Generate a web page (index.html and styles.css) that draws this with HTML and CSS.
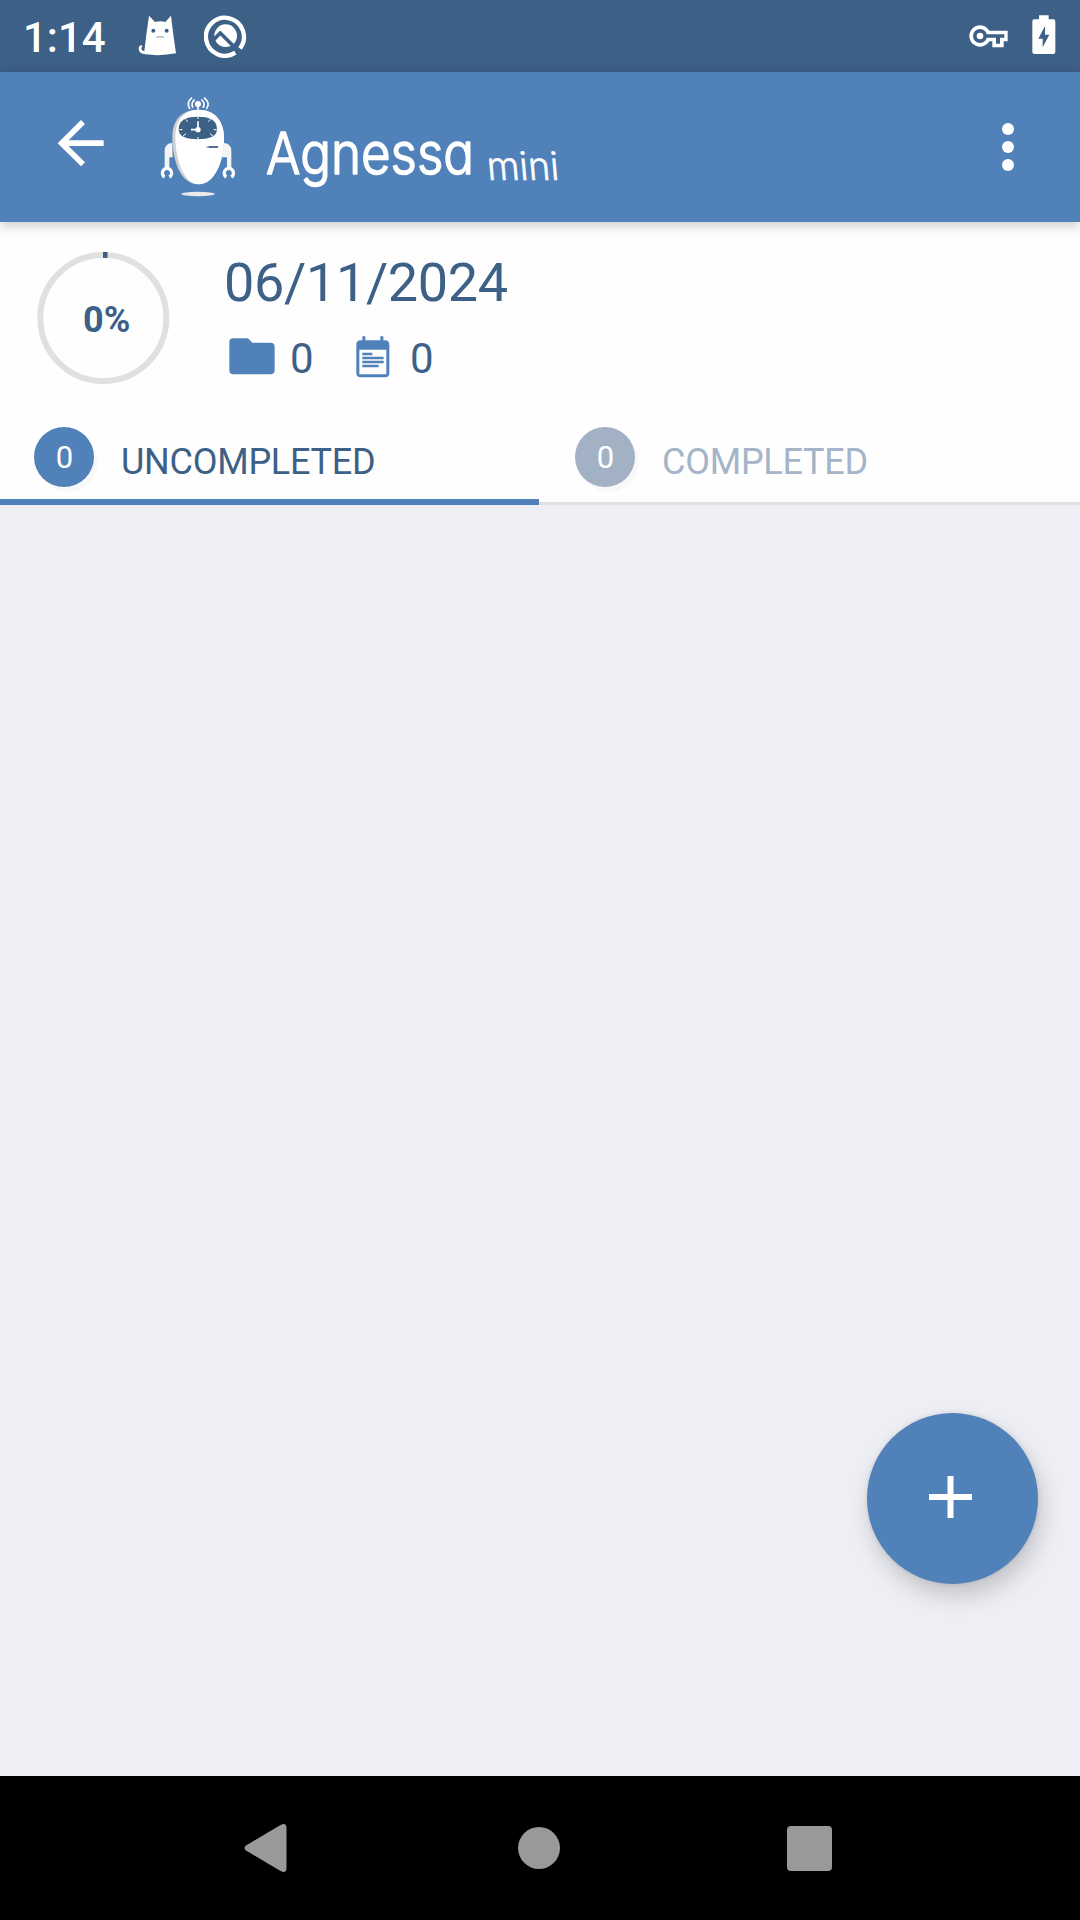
FILE: index.html
```html
<!DOCTYPE html>
<html lang="en">
<head>
<meta charset="utf-8">
<title>Agnessa mini</title>
<link rel="stylesheet" href="styles.css">
</head>
<body>
<div class="screen">
  <div class="status">
    <span class="clock">1:14</span>
    <svg class="cat" width="40" height="42" viewBox="414 42 120 126">
      <path fill="#fff" d="M447 47L465 66Q481 61 496 66L513 47Q518 92 528 160Q482 169 436 163Q417 161 416 147Q416 136 425 136Q429 138 425 142Q421 151 433 154Q439 100 447 47Z"/>
      <circle cx="460" cy="92" r="6" fill="#3d6087"/><circle cx="500" cy="92" r="6" fill="#3d6087"/>
      <path d="M471 111Q480 109 490 111" stroke="#b4c0ce" stroke-width="5" fill="none" stroke-linecap="round"/>
    </svg>
    <svg class="q" width="44" height="44" viewBox="612 42 132 132">
      <path d="M706 158A57 57 0 1 1 720 145" fill="none" stroke="#fff" stroke-width="13"/>
      <circle cx="677" cy="107" r="34" fill="#fff"/>
      <path d="M636 124L661 99L712 150" fill="none" stroke="#3d6087" stroke-width="11"/>
    </svg>
    <span class="grow"></span>
    <svg class="key" width="40" height="24" viewBox="90 76 120 72">
      <circle cx="123" cy="109" r="32" fill="#fff"/>
      <path d="M145 93H206V125H194V143H160V125H145Z" fill="#fff"/>
      <circle cx="123" cy="109" r="21" fill="#3d6087"/>
      <path d="M140 104H196V114H183V132H171V114H140Z" fill="#3d6087"/>
      <circle cx="123" cy="109" r="10" fill="#fff"/>
    </svg>
    <svg width="24" height="40" viewBox="278 47 72 120">
      <path fill="#fff" fill-rule="evenodd" d="M299 48H328V60H342Q348 60 348 66V158Q348 164 342 164H285Q279 164 279 158V66Q279 60 285 60H299ZM317 80L297 118H310V144L330 106H317Z"/>
    </svg>
  </div>

  <div class="appbar">
    <svg class="back" width="48" height="48" viewBox="82 118 144 144">
      <path d="M222 190.500H97M160 127L96 190.500L160 254" fill="none" stroke="#fff" stroke-width="17"/>
    </svg>
    <svg class="robot" width="76" height="103" viewBox="390 45 228 309">
      <g fill="none" stroke="#fff" stroke-width="5">
        <path d="M486 53Q467 69 480 87M494 59Q481 70 489 83M522 53Q543 69 529 87M514 59Q528 70 519 83"/>
        <path d="M504 72V95"/>
      </g>
      <circle cx="504" cy="72" r="9" fill="#fff"/>
      <path d="M427 189Q404 190 404 213V264H418V232H428ZM580 189Q604 190 604 213V264H591V232H575Z" fill="#f4f4f4"/>
      <path d="M404 291A14 14 0 1 1 418 291M589 291A14 14 0 1 1 604 291" fill="none" stroke="#fff" stroke-width="10"/>
      <path d="M504 89C452 89 427 124 427 169C427 246 453 313 504 313C553 313 582 247 582 174C582 126 557 89 504 89Z" fill="#d0d0d0"/>
      <path d="M506 89C460 89 436 124 436 169C436 242 462 313 506 313C553 313 582 247 582 174C582 126 557 89 506 89Z" fill="#fff"/>
      <path d="M446 148C446 119 469 110 503 110C538 110 561 119 561 148C561 170 537 178 503 178C469 178 446 170 446 148Z" fill="#3d6087"/>
      <path d="M504 111V117M504 171V177M448 149H457M551 149H560M467 118L473 125M541 118L535 125M459 168L468 161M549 168L540 161" stroke="#fff" stroke-width="3"/>
      <path d="M504 149V124M504 149H483" stroke="#fff" stroke-width="5"/>
      <circle cx="504" cy="149" r="8" fill="#fff"/>
      <path d="M529 201H564" stroke="#9fb0c4" stroke-width="5"/><path d="M536 201H564" stroke="#3d6087" stroke-width="5"/>
      <ellipse cx="504" cy="342" rx="50" ry="6.500" fill="#ebebeb"/>
    </svg>
    <svg class="brand" width="310" height="112" viewBox="260 105 310 112" role="img" aria-label="Agnessa mini">
      <text class="brand-name" x="266" y="174" textLength="208" lengthAdjust="spacingAndGlyphs">Agnessa</text>
      <text class="brand-sub" x="0" y="0" transform="translate(488 180) skewX(5)" textLength="72" lengthAdjust="spacingAndGlyphs">mini</text>
    </svg>
    <span class="grow"></span>
    <svg width="12" height="48" viewBox="0 0 12 48" fill="#fff"><circle cx="6" cy="6" r="6"/><circle cx="6" cy="24" r="6"/><circle cx="6" cy="42" r="6"/></svg>
  </div>

  <div class="summary">
    <div class="ring">
      <svg width="134" height="134" viewBox="0 0 134 134">
        <circle cx="66.300" cy="67" r="63" fill="none" stroke="#e0e0e0" stroke-width="6"/>
        <path d="M66 4H70.500" stroke="#3d6087" stroke-width="6"/>
      </svg>
      <span class="percent">0%</span>
    </div>
    <div class="info">
      <div class="date">06/11/2024</div>
      <div class="counts">
        <svg class="folder" width="46" height="37" viewBox="56 293 138 111"><path fill="#5181b9" d="M69 294H109Q113 294 116 297L126 307H180Q193 307 193 319V389Q193 402 180 402H69Q57 402 57 389V306Q57 294 69 294Z"/></svg>
        <span class="count">0</span>
        <svg class="note" width="34" height="42" viewBox="437 287 102 126">
          <path fill="#5181b9" fill-rule="evenodd" d="M456 288H465V300H510V288H519V300H523Q537 300 537 313V398Q537 411 523 411H452Q438 411 438 398V313Q438 300 452 300H456ZM447 328V402H528V328Z"/>
          <path d="M456 341H486M456 353H520M456 365H520M456 377H505" stroke="#5181b9" stroke-width="7"/>
        </svg>
        <span class="count">0</span>
      </div>
    </div>
  </div>

  <div class="tabs">
    <div class="tab active"><span class="badge">0</span><span class="label">UNCOMPLETED</span></div>
    <div class="tab"><span class="badge">0</span><span class="label">COMPLETED</span></div>
  </div>

  <div class="content">
    <div class="fab"><svg width="43" height="42" viewBox="0 0 43 42"><path d="M0 21H43M21.500 0V42" stroke="#fff" stroke-width="6"/></svg></div>
  </div>

  <div class="nav">
    <svg width="43" height="48" viewBox="0 0 43 48"><path d="M37 .8Q42.500-1.500 42.500 4V44Q42.500 49.500 37 47.200L2 26.500Q-1 24 2 21.500Z" fill="#999"/></svg>
    <span class="home"></span>
    <span class="recent"></span>
  </div>
</div>
</body>
</html>
```
FILE: styles.css
```css
* { box-sizing: border-box; }
body { margin: 0; font-family: Roboto, "Liberation Sans", sans-serif; }
svg { display: block; flex: none; }
.screen { width: 1080px; height: 1920px; display: flex; flex-direction: column; overflow: hidden; background: #eeeff5; }
.grow { flex: 1; }

.status { height: 72px; flex: none; display: flex; align-items: flex-start; padding: 15px 24px 0 23px; background: #3d6087; }
.clock { width: 115px; color: #fff; font-size: 42px; font-weight: 500; line-height: 46px; }
.cat { margin-top: -1px; }
.q { margin: -1px 0 0 26px; }
.key { margin: 10px 23px 0 0; }

.appbar { height: 150px; flex: none; display: flex; align-items: flex-start; padding: 51px 66px 0 57px; background: #5181b9; box-shadow: 0 3px 12px rgba(0,0,0,.22); z-index: 1; }
.back { margin-top: -4px; }
.robot { margin: -28px 0 0 55px; }
.brand { margin: -18px 0 0 24px; }
.brand-name, .brand-sub { font-family: Inter, sans-serif; font-feature-settings: "cv11"; fill: #fff; stroke: #fff; stroke-linejoin: round; }
.brand-name { font-size: 58px; font-weight: 300; stroke-width: 1.600px; }
.brand-sub { font-size: 39px; font-weight: 300; stroke-width: .5px; }

.summary { height: 192px; flex: none; display: flex; padding: 29px 0 0 37px; background: #fefefe; }
.ring { width: 134px; height: 134px; display: grid; }
.ring > * { grid-area: 1 / 1; }
.percent { color: #3d6087; font-size: 36px; font-weight: 700; line-height: 138px; padding-left: 46px; }
.info { margin-left: 53px; color: #3d6087; }
.date { font-size: 54px; line-height: 64px; letter-spacing: -.35px; }
.counts { display: flex; align-items: flex-start; margin-top: 20px; padding-left: 5px; }
.folder { margin-top: 3px; }
.count { width: 24px; margin-left: 15px; font-size: 42px; line-height: 48px; }
.note { margin: 1px 5px 0 42px; }

.tabs { height: 91px; flex: none; display: flex; background: #fefefe; }
.tab { flex: 1; display: flex; padding: 13px 0 0 34px; border-bottom: 3px solid #e0e0e0; color: #a4b4c9; }
.tab:last-child { padding-left: 36px; }
.active { flex: 0 0 539px; border-bottom: 6px solid #5181b9; color: #3d6087; }
.badge { width: 60px; height: 60px; padding-left: 1px; border-radius: 50%; background: #a3b1c5; color: #fff; font-size: 31px; line-height: 61px; text-align: center; box-shadow: 4px 5px 1px #f8f8fa; }
.active .badge { background: #5181b9; }
.label { margin-left: 27px; font-size: 36px; line-height: 70px; letter-spacing: -.25px; }

.content { flex: 1; display: flex; align-items: flex-end; justify-content: flex-end; padding: 0 42px 192px 0; }
.fab { width: 171px; height: 171px; border-radius: 50%; background: #5181b9; display: flex; align-items: center; justify-content: center; padding: 0 4px 3px 0; box-shadow: 4px 12px 22px rgba(0,0,0,.18), 0 0 5px rgba(0,0,0,.1); }

.nav { height: 144px; flex: none; display: flex; align-items: center; padding-left: 244px; background: #000; }
.home { width: 42px; height: 42px; margin-left: 231px; border-radius: 50%; background: #999; }
.recent { width: 45px; height: 45px; margin-left: 227px; border-radius: 4px; background: #999; }
```
